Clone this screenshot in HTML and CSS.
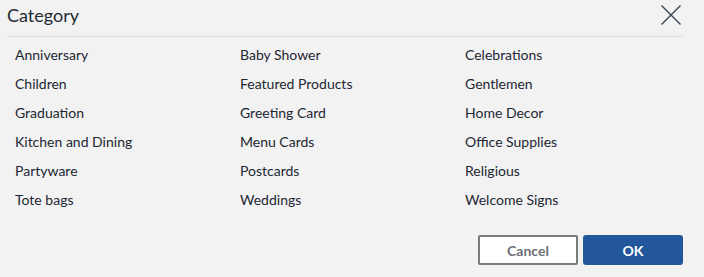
FILE: index.html
```html
<!DOCTYPE html>
<html>
<head>
<meta charset="utf-8">
<link rel="stylesheet" href="styles.css">
</head>
<body>
<div class="dialog">
  <div class="header">
    <h1 class="title">Category</h1>
    <button class="close" aria-label="Close">
      <svg width="22" height="22" viewBox="0 0 22 22"><path d="M1.5 1.5L20.5 20.5M20.5 1.5L1.5 20.5" stroke="#3a4450" stroke-width="1.4" fill="none"/></svg>
    </button>
  </div>
  <div class="grid">
    <span class="item">Anniversary</span><span class="item">Baby Shower</span><span class="item">Celebrations</span>
    <span class="item">Children</span><span class="item">Featured Products</span><span class="item">Gentlemen</span>
    <span class="item">Graduation</span><span class="item">Greeting Card</span><span class="item">Home Decor</span>
    <span class="item">Kitchen and Dining</span><span class="item">Menu Cards</span><span class="item">Office Supplies</span>
    <span class="item">Partyware</span><span class="item">Postcards</span><span class="item">Religious</span>
    <span class="item">Tote bags</span><span class="item">Weddings</span><span class="item">Welcome Signs</span>
  </div>
  <div class="footer">
    <button class="btn cancel">Cancel</button>
    <button class="btn ok">OK</button>
  </div>
</div>
</body>
</html>
```
FILE: styles.css
```css
html, body {
  margin: 0;
  padding: 0;
  background: #f2f2f2;
}
body {
  font-family: "Lato", "Open Sans", sans-serif;
  color: #1c2733;
}
.dialog {
  width: 704px;
  height: 277px;
  padding: 0 21px 0 7px;
  box-sizing: border-box;
}
.header {
  display: flex;
  align-items: center;
  justify-content: space-between;
  height: 36px;
  border-bottom: 1px solid #dcdcdc;
}
.title {
  margin: 0;
  font-size: 18px;
  font-weight: 400;
  color: #1f2a35;
  padding-bottom: 6px;
}
.close {
  border: 0;
  background: none;
  padding: 0;
  margin-right: 1px;
  width: 22px;
  height: 22px;
  margin-top: -7px;
}
.close svg { display: block; }
.grid {
  display: grid;
  grid-template-columns: 225px 225px 225px;
  grid-auto-rows: 29px;
  padding: 3px 0 0 8px;
}
.item {
  font-size: 14px;
  line-height: 29px;
}
.footer {
  display: flex;
  justify-content: flex-end;
  gap: 5px;
  margin-top: 21px;
}
.btn {
  width: 100px;
  height: 30px;
  font-family: inherit;
  font-size: 14px;
  font-weight: 700;
  border-radius: 2px;
  cursor: pointer;
}
.cancel {
  background: #fff;
  border: 2px solid #7a7a7a;
  color: #6b6f75;
}
.ok {
  background: #22579c;
  border: 0;
  border-radius: 3px;
  color: #fff;
}
```
